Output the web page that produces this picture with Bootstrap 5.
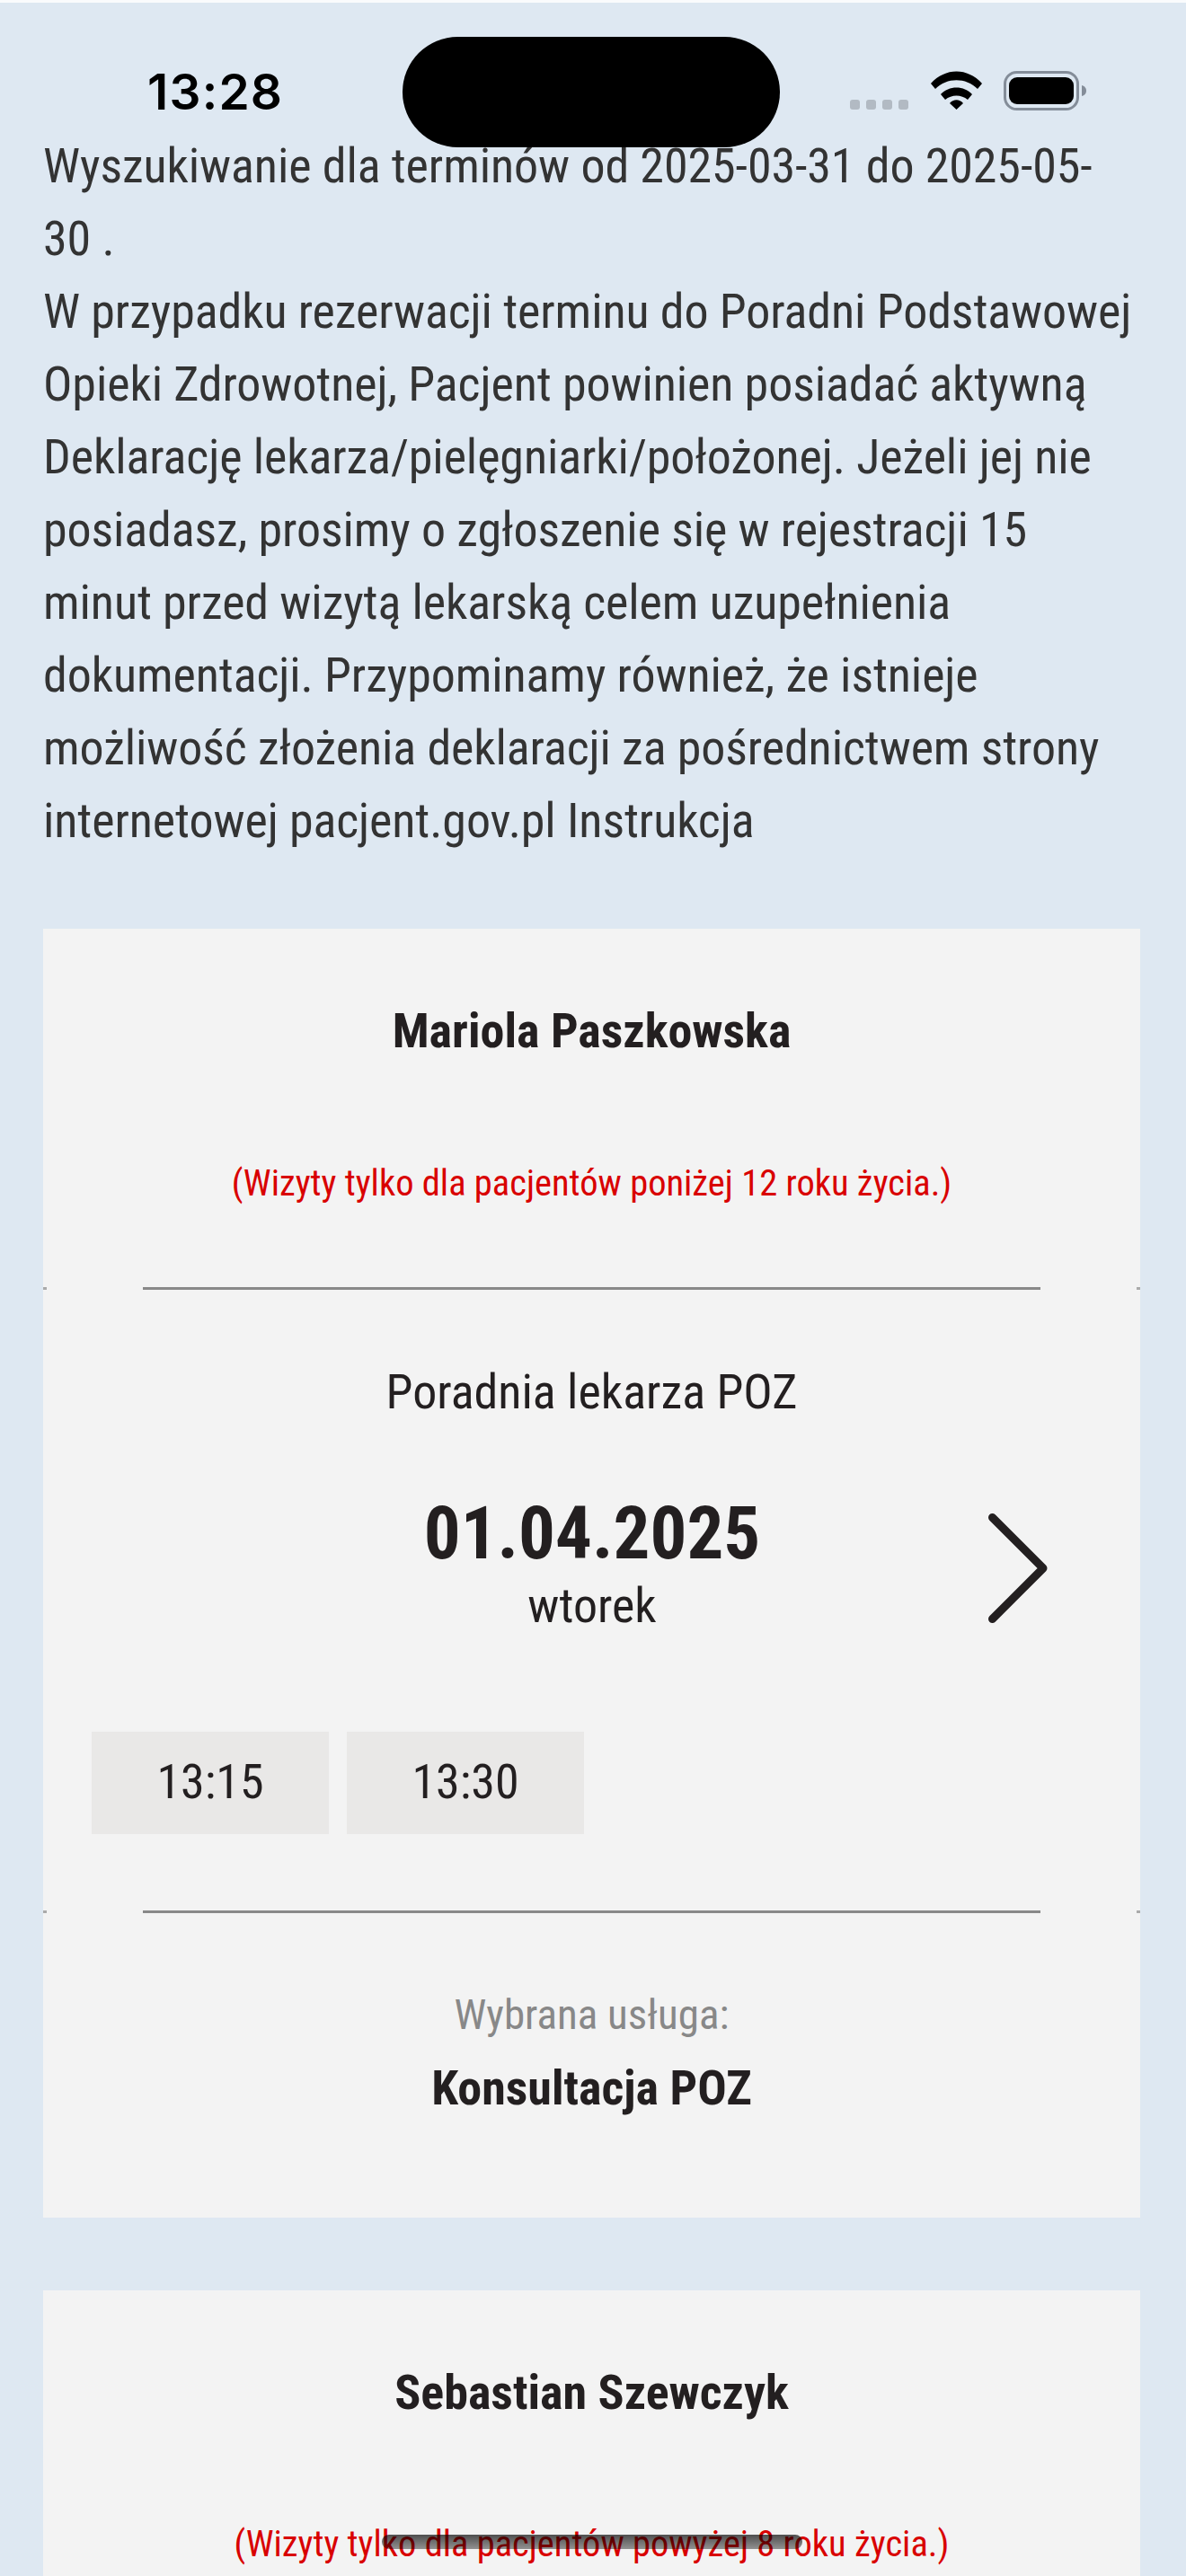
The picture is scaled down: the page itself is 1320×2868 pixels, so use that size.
<!DOCTYPE html>
<html lang="pl">
<head>
<meta charset="utf-8">
<title>Wyszukiwanie terminów</title>
<link href="https://cdn.jsdelivr.net/npm/bootstrap@5.3.0/dist/css/bootstrap.min.css" rel="stylesheet">
<style>
html,body{margin:0;padding:0}
body{background:#dee8f2;color:#333;font-family:"Roboto Condensed","Liberation Sans Narrow",Roboto,sans-serif;font-stretch:condensed;font-size:54px;line-height:81px;overflow:hidden;height:2868px;border-top:3px solid #fafbfd}
.statusbar{position:absolute;left:0;top:0;width:1320px;height:164px}
.clock{position:absolute;left:164px;top:70px;font:600 55px/64px "Inter","Liberation Sans",sans-serif;color:#000;letter-spacing:1.2px}
.island{position:absolute;left:448px;top:41px;width:420px;height:123px;border-radius:62px;background:#000}
.sb-icons{position:absolute;left:946px;top:79px}
.intro{padding:141px 57px 0 48px;margin:0 0 80px;letter-spacing:-.1px}
.slotcard{background:#f3f3f3;color:#231f20;margin:0 51px 81px 48px;padding-top:73px;text-align:center}
.person{font-weight:700}
.note{color:#d90000;font-size:40.5px;line-height:60.75px;margin-top:99px}
.note-first{margin-bottom:85px}
.note-second{margin-top:98px}
.sep{height:3px;background:linear-gradient(90deg,#aaa 0 4px,transparent 4px calc(100% - 4px),#aaa calc(100% - 4px));padding:0 111px}
.sep>div{height:3px;background:#888}
.clinic{padding-top:73px}
.daterow{padding:0 103px 0 104px;margin-top:79px}
.datebig{font-size:81px;font-weight:700;line-height:78px}
.spacer{width:66px}
.chev{margin-bottom:5px}
.slot{width:264px;height:114px;background:#e9e8e7;line-height:112px}
.slots{padding:0 54px;gap:20px;margin-top:100px;margin-bottom:85px}
.muted-label{color:#888;font-size:47px;line-height:70.5px;margin-top:78px}
.service{margin-top:5.5px;padding-bottom:104px}
.cut{height:400px;margin-bottom:0}
.home{position:absolute;left:425px;top:2822px;width:468px;height:16px;border-radius:8px;background:linear-gradient(180deg,rgba(0,0,0,.68),rgba(0,0,0,.4))}
</style>
</head>
<body>
<div class="statusbar">
  <div class="clock">13:28</div>
  <div class="island"></div>
  <svg class="sb-icons" width="266" height="44" viewBox="0 0 266 44">
    <g fill="#b2bac3"><rect x="0" y="32" width="11" height="11" rx="3"/><rect x="18" y="32" width="11" height="11" rx="3"/><rect x="36" y="32" width="11" height="11" rx="3"/><rect x="54" y="32" width="11" height="11" rx="3"/></g>
    <path d="M90 14 C106 -4 131 -4 147 14 L142 20 C129 7 108 7 95 20Z M101 26 C110 16 127 16 136 26 L131 32 C124 26 113 26 106 32Z M111 36 C115 31 122 31 126 36 L118.500 43Z" fill="#000"/>
    <rect x="172.500" y="1.500" width="81" height="41" rx="13" fill="none" stroke="#848d99" stroke-width="3"/>
    <rect x="177" y="7" width="72" height="30" rx="9" fill="#000"/>
    <path d="M258 16 C262 17 263 20 263 22 C263 24 262 27 258 28Z" fill="#848d99"/>
  </svg>
</div>
<p class="intro">Wyszukiwanie dla terminów od 2025-03-31 do 2025-05-30 .<br>W przypadku rezerwacji terminu do Poradni Podstawowej Opieki Zdrowotnej, Pacjent powinien posiadać aktywną Deklarację lekarza/pielęgniarki/położonej. Jeżeli jej nie posiadasz, prosimy o zgłoszenie się w rejestracji 15 minut przed wizytą lekarską celem uzupełnienia dokumentacji. Przypominamy również, że istnieje możliwość złożenia deklaracji za pośrednictwem strony internetowej pacjent.gov.pl Instrukcja</p>
<div class="slotcard">
  <div class="person">Mariola Paszkowska</div>
  <div class="note note-first">(Wizyty tylko dla pacjentów poniżej 12 roku życia.)</div>
  <div class="sep"><div></div></div>
  <div class="clinic">Poradnia lekarza POZ</div>
  <div class="daterow d-flex align-items-center justify-content-between">
    <div class="spacer"></div>
    <div><div class="datebig">01.04.2025</div><div>wtorek</div></div>
    <svg class="chev" width="66" height="122" viewBox="0 0 66 122"><path d="M4.500 4.500 L61 61 L4.500 117.500" fill="none" stroke="#231f20" stroke-width="9" stroke-linecap="round" stroke-linejoin="round"/></svg>
  </div>
  <div class="slots d-flex"><div class="slot">13:15</div><div class="slot">13:30</div></div>
  <div class="sep"><div></div></div>
  <div class="muted-label">Wybrana usługa:</div>
  <div class="person service">Konsultacja POZ</div>
</div>
<div class="slotcard cut">
  <div class="person">Sebastian Szewczyk</div>
  <div class="note note-second">(Wizyty tylko dla pacjentów powyżej 8 roku życia.)</div>
</div>
<div class="home"></div>
</body>
</html>
